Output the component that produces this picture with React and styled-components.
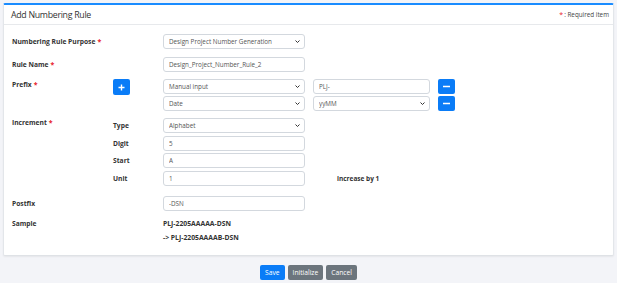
import styled, { createGlobalStyle } from "styled-components";

const GlobalStyle = createGlobalStyle`
  html, body {
    margin: 0;
    padding: 0;
    background: #f3f4f8;
    font-family: "Open Sans", "Noto Sans", sans-serif;
  }
  * { box-sizing: border-box; }
`;

const Page = styled.div`
  width: 617px;
  height: 283px;
  padding: 3px 3px 0 3px;
`;

const Card = styled.div`
  background: #fff;
  border-top: 2px solid #1a8cff;
  border-left: 1px solid #e3e6ea;
  border-right: 1px solid #e3e6ea;
  border-bottom: 1px solid #dfe2e6;
  border-radius: 2px;
  box-shadow: 0 1px 2px rgba(0, 0, 0, 0.06);
  height: 253px;
`;

const Header = styled.div`
  display: flex;
  align-items: center;
  justify-content: space-between;
  height: 20px;
  padding: 0 4px 0 7px;
  border-bottom: 1px solid #e7e9ec;

  h2 {
    margin: 0;
    font-size: 8.8px;
    font-weight: 400;
    color: #333;
    letter-spacing: -0.3px;
  }
`;

const Legend = styled.span`
  font-size: 6.3px;
  color: #444;
`;

const Star = styled.span`
  color: #e8202a;
  font-size: 7px;
  margin-left: ${(p) => p.$ml ?? 2}px;
  margin-right: ${(p) => p.$mr ?? 0}px;
`;

const Body = styled.div`
  padding: 9px 8px 0 8px;
  display: flex;
  flex-direction: column;
`;

const Section = styled.div`
  display: flex;
  align-items: flex-start;
  margin-bottom: ${(p) => p.$gap ?? 8}px;
`;

const Label = styled.div`
  width: 101px;
  flex: none;
  font-size: 6.7px;
  font-weight: 700;
  color: #333;
  padding-top: ${(p) => p.$top ?? 3}px;
  display: flex;
  align-items: center;
`;

const Lines = styled.div`
  display: flex;
  flex-direction: column;
  gap: ${(p) => p.$gap ?? 3}px;
`;

const Line = styled.div`
  display: flex;
  align-items: center;
  height: 15px;
`;

const Side = styled.div`
  width: 50px;
  flex: none;
  font-size: 6.7px;
  font-weight: 700;
  color: #333;
  display: flex;
  align-items: center;
`;

const fieldBase = `
  display: block;
  height: 15px;
  margin: 0;
  border: 1px solid #d3d8de;
  border-radius: 3px;
  background: #fff;
  font-family: "Open Sans", "Noto Sans", sans-serif;
  font-size: 6.3px;
  color: #555;
  padding: 0 0 0 5px;
  outline: none;
`;

const Input = styled.input`
  ${fieldBase}
  width: ${(p) => p.$w ?? 142}px;
  margin-right: 8px;
`;

const SelectWrap = styled.div`
  position: relative;
  display: flex;
  flex: none;
  width: ${(p) => p.$w ?? 142}px;
  height: 15px;
  margin-right: 8px;

  svg {
    position: absolute;
    right: 5px;
    top: 6px;
    pointer-events: none;
  }
`;

const NativeSelect = styled.select`
  ${fieldBase}
  width: 100%;
  appearance: none;
  -webkit-appearance: none;
  padding-left: 5px;
`;

const Chevron = () => (
  <svg width="5" height="3" viewBox="0 0 5 3">
    <path d="M0.5 0.5L2.5 2.5L4.5 0.5" stroke="#333" strokeWidth="1" fill="none" />
  </svg>
);

const Select = ({ w, value }) => (
  <SelectWrap $w={w}>
    <NativeSelect defaultValue={value}>
      <option value={value}>{value}</option>
    </NativeSelect>
    <Chevron />
  </SelectWrap>
);

const IconButton = styled.button`
  width: 17px;
  height: ${(p) => p.$h ?? 15}px;
  border: none;
  border-radius: 2px;
  background: #0a7cf7;
  display: flex;
  align-items: center;
  justify-content: center;
  padding: 0;
`;

const Note = styled.span`
  margin-left: 24px;
  font-size: 6.5px;
  font-weight: 700;
  color: #333;
`;

const SampleText = styled.div`
  font-size: 6.8px;
  font-weight: 700;
  color: #333;
  line-height: 14px;
`;

const Actions = styled.div`
  display: flex;
  justify-content: center;
  gap: 3px;
  margin-top: 9px;
`;

const Button = styled.button`
  height: 15px;
  padding: 0 5px;
  border: none;
  border-radius: 2px;
  font-family: "Open Sans", "Noto Sans", sans-serif;
  font-size: 6.7px;
  color: #fff;
  background: ${(p) => (p.$primary ? "#0a7cf7" : "#6c757d")};
`;

const Plus = () => (
  <svg width="7" height="7" viewBox="0 0 7 7">
    <path d="M3.5 0.5v6M0.5 3.5h6" stroke="#fff" strokeWidth="1.4" />
  </svg>
);

const Minus = () => (
  <svg width="7" height="3" viewBox="0 0 7 3">
    <path d="M0.5 1.5h6" stroke="#fff" strokeWidth="1.6" strokeLinecap="round" />
  </svg>
);

export default function App() {
  return (
    <>
      <GlobalStyle />
      <Page>
        <Card>
          <Header>
            <h2>Add Numbering Rule</h2>
            <Legend>
              <Star $ml={0} $mr={1}>*</Star>: Required item
            </Legend>
          </Header>
          <Body>
            <Section>
              <Label>
                Numbering Rule Purpose<Star>*</Star>
              </Label>
              <Side />
              <Select value="Design Project Number Generation" />
            </Section>

            <Section $gap={7}>
              <Label>
                Rule Name<Star>*</Star>
              </Label>
              <Side />
              <Input defaultValue="Design_Project_Number_Rule_2" />
            </Section>

            <Section $gap={7}>
              <Label $top={1}>
                Prefix<Star>*</Star>
              </Label>
              <Side>
                <IconButton $h={16}>
                  <Plus />
                </IconButton>
              </Side>
              <Lines $gap={2}>
                <Line>
                  <Select value="Manual input" />
                  <Input $w={117} defaultValue="PLJ-" />
                  <IconButton>
                    <Minus />
                  </IconButton>
                </Line>
                <Line>
                  <Select value="Date" />
                  <Select w={117} value="yyMM" />
                  <IconButton>
                    <Minus />
                  </IconButton>
                </Line>
              </Lines>
            </Section>

            <Section $gap={10}>
              <Label $top={0}>
                Increment<Star>*</Star>
              </Label>
              <Lines $gap={2.7}>
                <Line>
                  <Side>Type</Side>
                  <Select value="Alphabet" />
                </Line>
                <Line>
                  <Side>Digit</Side>
                  <Input defaultValue="5" />
                </Line>
                <Line>
                  <Side>Start</Side>
                  <Input defaultValue="A" />
                </Line>
                <Line>
                  <Side>Unit</Side>
                  <Input defaultValue="1" />
                  <Note>increase by 1</Note>
                </Line>
              </Lines>
            </Section>

            <Section $gap={6}>
              <Label>Postfix</Label>
              <Side />
              <Input defaultValue="-DSN" />
            </Section>

            <Section $gap={0}>
              <Label $top={2}>Sample</Label>
              <Side />
              <div>
                <SampleText>PLJ-2205AAAAA-DSN</SampleText>
                <SampleText>-&gt; PLJ-2205AAAAB-DSN</SampleText>
              </div>
            </Section>
          </Body>
        </Card>
        <Actions>
          <Button $primary>Save</Button>
          <Button>Initialize</Button>
          <Button>Cancel</Button>
        </Actions>
      </Page>
    </>
  );
}
